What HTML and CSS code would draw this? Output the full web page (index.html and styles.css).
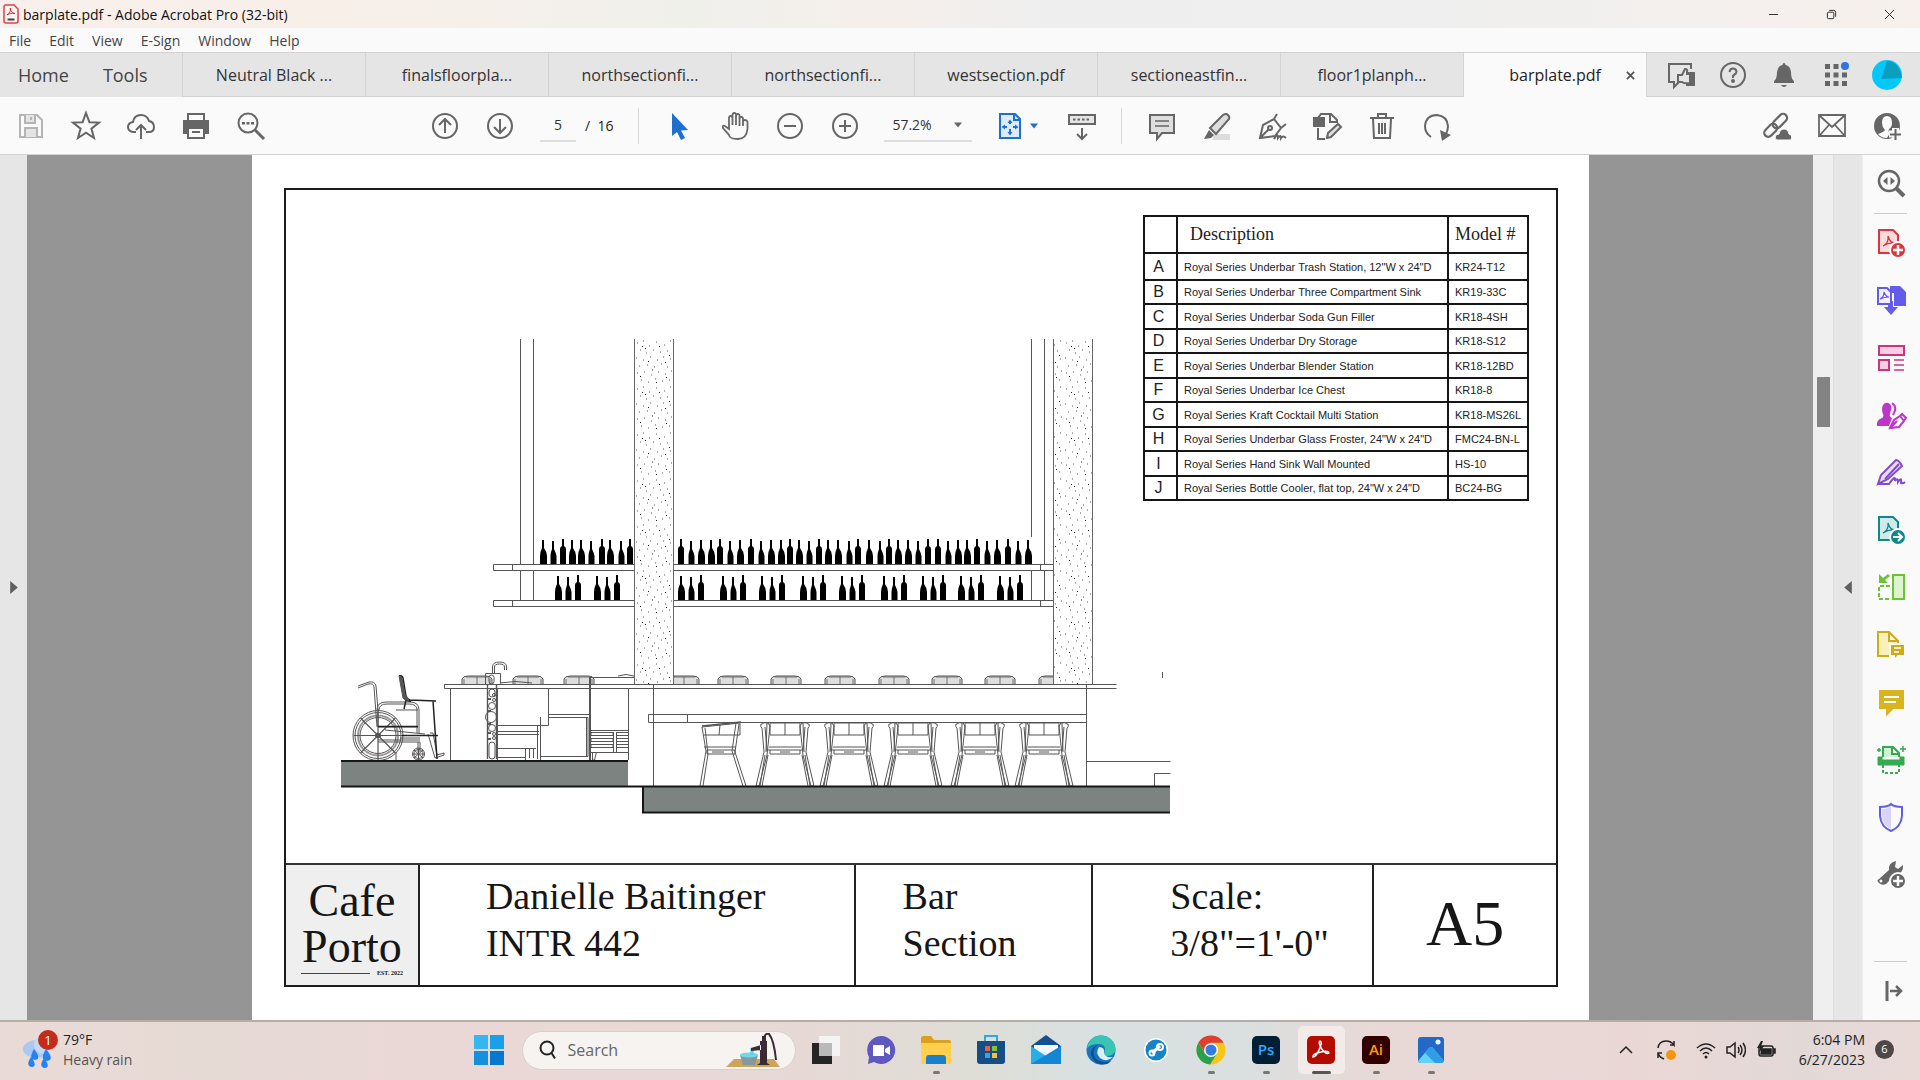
FILE: index.html
```html
<!DOCTYPE html>
<html lang="en">
<head>
    <meta charset="UTF-8">
    <meta name="viewport" content="width=device-width, initial-scale=1.0">
    <title>barplate.pdf - Adobe Acrobat Pro (32-bit)</title>
    <link rel="stylesheet" href="styles.css">
</head>
<body>
    <header class="titlebar">
        <svg class="app-icon" viewBox="0 0 16 20"><path d="M2 1h9l4 4v12q0 2-2 2H3q-2 0-2-2V3q0-2 1-2z" fill="#fff4f4" stroke="#d8434e" stroke-width="1.5"/><path d="M4 11c3-2 4-5 3.500-7-1 1 1 5 4.500 5.500-3-.5-6 0-8 1.500z" fill="none" stroke="#d42d35"/><path d="M4.500 15.500h7" stroke="#444" stroke-width="2"/></svg>
        <h1>barplate.pdf - Adobe Acrobat Pro (32-bit)</h1>
        <div class="win-buttons">
            <button aria-label="Minimize"><svg viewBox="0 0 12 12"><path d="M1 6h10"/></svg></button>
            <button aria-label="Restore"><svg viewBox="0 0 12 12"><rect x="1.500" y="3.500" width="7" height="7" rx="1"/><path d="M3.500 1.500h5q2 0 2 2v5"/></svg></button>
            <button aria-label="Close"><svg viewBox="0 0 12 12"><path d="M1 1l10 10M11 1L1 11"/></svg></button>
        </div>
    </header>

    <nav class="menubar">
        <button>File</button>
        <button>Edit</button>
        <button>View</button>
        <button>E-Sign</button>
        <button>Window</button>
        <button>Help</button>
    </nav>

    <nav class="tabs">
        <div class="tabs-home">
            <button>Home</button>
            <button>Tools</button>
        </div>
        <button class="tab">Neutral Black ...</button>
        <button class="tab">finalsfloorpla...</button>
        <button class="tab">northsectionfi...</button>
        <button class="tab">northsectionfi...</button>
        <button class="tab">westsection.pdf</button>
        <button class="tab">sectioneastfin...</button>
        <button class="tab">floor1planph...</button>
        <div class="tab active"><span>barplate.pdf</span><button class="tab-close" aria-label="Close tab"><svg viewBox="0 0 10 10"><path d="M1 1l8 8M9 1L1 9"/></svg></button></div>
        <div class="account">
            <button aria-label="Feedback"><svg class="ic" viewBox="0 0 30 30"><path d="M25 9V4H3v18h5v5l5-5"/><path class="f" d="M21 13h7v12h-7z"/><path fill="#e5e5e5" d="M12 15h4l3-6q3 0 2 3v2h3v9q-5 1-8-1h-4z"/></svg></button>
            <button aria-label="Help"><svg class="ic" viewBox="0 0 30 30"><circle cx="15" cy="15" r="12"/><path d="M11.500 12q.5-3.500 3.500-3.500t3.500 3q0 2-2 3T15 18"/><circle class="f" cx="15" cy="21" r="1"/></svg></button>
            <button aria-label="Notifications"><svg class="ic" viewBox="0 0 30 30"><path class="f" stroke="none" d="M13.500 5q0-2 1.500-2t1.500 2q5 1 5.500 7 0 7 3 9v2H5v-2q3-2 3-9 .5-6 5.500-7zM12 25h6q-3 4-6 0z"/></svg></button>
            <button aria-label="Apps"><svg class="ic" viewBox="0 0 30 30"><path class="f" stroke="none" d="M4 4h5v5H4zM12.500 4h5v5h-5zM4 12.500h5v5H4zM12.500 12.500h5v5h-5zM21 12.500h5v5h-5zM4 21h5v5H4zM12.500 21h5v5h-5zM21 21h5v5h-5z"/><circle cx="24" cy="6" r="4" fill="#2f75dd" stroke="none"/></svg></button>
            <button aria-label="Profile"><svg class="ic" viewBox="0 0 30 30"><circle cx="15" cy="15" r="15" fill="#04c8fb" stroke="none"/><path d="M15 1q12 0 15 17L9 19z" fill="#0a9fbe" stroke="none"/></svg></button>
        </div>
    </nav>

    <div class="toolbar">
        <div class="tools">
            <button aria-label="Save" disabled><svg class="ic pale" viewBox="0 0 30 30"><path d="M4 4h17l5 5v17H4z"/><path d="M9 4v8h10V4M15 6v3M9 26v-9h12v9" fill="#e4e4e4"/></svg></button>
            <button aria-label="Star"><svg class="ic" viewBox="0 0 30 30"><path d="M15 2l3.400 9.200 9.600.4-7.600 6 2.600 9.400L15 21.600 7 27l2.600-9.400-7.600-6 9.600-.4z"/></svg></button>
            <button aria-label="Upload"><svg class="ic" viewBox="0 0 30 30"><path d="M10 21H7q-5-1-5-5t5-5q1-7 8-7 6 0 8 6 5 1 5 6 0 5-5 5h-3"/><path d="M15 28V14m-5 5l5-5 5 5"/></svg></button>
            <button aria-label="Print"><svg class="ic" viewBox="0 0 30 30"><path d="M7 11V3h16v8"/><path class="f" d="M3 10h24v12h-4v-5H7v5H3z"/><path d="M7 17h16v10H7z" fill="#fafafa"/><path d="M11 21h8"/></svg></button>
            <button aria-label="Find"><svg class="ic" viewBox="0 0 30 30"><circle cx="12" cy="12" r="9.500"/><path d="M19 19l9 9" stroke-width="3"/><path class="f" stroke="none" d="M6 11h3v2.500H6zM10.500 11h3v2.500h-3zM15 11h3v2.500h-3z"/></svg></button>
        </div>
        <div class="tools paging">
            <button aria-label="Previous page"><svg class="ic" viewBox="0 0 30 30"><circle cx="15" cy="15" r="12"/><path d="M15 22V8m-6 6l6-6 6 6"/></svg></button>
            <button aria-label="Next page"><svg class="ic" viewBox="0 0 30 30"><circle cx="15" cy="15" r="12"/><path d="M15 8v14m-6-6l6 6 6-6"/></svg></button>
            <input class="page-input" type="text" value="5" aria-label="Page number">
            <span class="page-total">/&nbsp; 16</span>
        </div>
        <div class="tools view-tools">
            <button aria-label="Select"><svg class="ic" viewBox="0 0 30 30"><path d="M7 2l16 17-7 .5 4 7.500-4 2-4-8-5 4z" fill="#1f6fce" stroke="none"/></svg></button>
            <button aria-label="Hand"><svg class="ic" viewBox="0 0 30 30"><path d="M9 18V7q0-2 1.700-2t1.800 2v7V4q0-2 1.800-2T16 4v10V5q0-2 1.800-2t1.700 2v10V8q0-2 1.800-2T23 8v7-4q0-2 2-2t2.500 2v7q-1 10-9.500 10T9 24l-6-7q-1-3 2-2z" stroke-width="1.800"/></svg></button>
            <button aria-label="Zoom out"><svg class="ic" viewBox="0 0 30 30"><circle cx="15" cy="15" r="12"/><path d="M9 15h12"/></svg></button>
            <button aria-label="Zoom in"><svg class="ic" viewBox="0 0 30 30"><circle cx="15" cy="15" r="12"/><path d="M9 15h12M15 9v12"/></svg></button>
            <label class="zoom">
                <select aria-label="Zoom level"><option>57.2%</option></select>
                <svg class="caret" viewBox="0 0 8 5"><path d="M0 0h8L4 5z"/></svg>
            </label>
            <button class="fit" aria-label="Fit page"><svg class="ic blue" viewBox="0 0 30 30"><path d="M5 3h15l5 5v19H5z" fill="#dcebfb"/><path d="M19 3v6h6M15 10v3M15 18v5M8 16h4M18 16h4" /><path class="f" stroke="none" d="M12.500 12L15 8.500l2.500 3.500zM12.500 21l2.500 3.500 2.500-3.500zM10 13.500L6.500 16l3.500 2.500zM20 13.500l3.500 2.500-3.500 2.500z"/></svg><svg class="caret blue" viewBox="0 0 8 5"><path d="M0 0h8L4 5z"/></svg></button>
            <button aria-label="Scroll mode"><svg class="ic" viewBox="0 0 30 30"><path d="M2 4h26v9H2z" fill="#e4e4e4"/><path d="M6 8.500h18" stroke-dasharray="2.500 2"/><path d="M15 17v11m-5-5l5 5 5-5"/></svg></button>
        </div>
        <div class="tools">
            <button aria-label="Comment"><svg class="ic" viewBox="0 0 30 30"><path d="M3 4h24v18H15l-5 6v-6H3z" fill="#dedede"/><path d="M8 10h14M8 15h14" stroke-width="1.500"/></svg></button>
            <button aria-label="Highlight"><svg class="ic" viewBox="0 0 30 30"><path d="M12 23h16v6H10z" fill="#dcdcdc" stroke="none"/><path d="M8 17L21 4q3-2 5 0t1 4L14 23z" fill="#dedede"/><path class="f" d="M7 19l5 5-3 3-7 1z" stroke="none"/></svg></button>
            <button aria-label="Sign"><svg class="ic" viewBox="0 0 30 30"><path d="M3 27l3-13 11-6 7 9-6 8zM17 8l3-5M24 17l5-4M3 27l9-9"/><circle cx="13" cy="17" r="2"/><path d="M17 28q4-7 4-1 3-4 3 0 2-3 5 0"/></svg></button>
            <button aria-label="Edit"><svg class="ic" viewBox="0 0 30 30"><path d="M6 7l3-4h10l6 6v3M18 4v7h7M6 17v11h7"/><path class="f" d="M2 7h10v8H2z"/><path d="M15 27l1-5 10-9 3 3-10 10z" fill="#dedede"/></svg></button>
            <button aria-label="Delete"><svg class="ic" viewBox="0 0 30 30"><path d="M3 7h24M11 7V3h8v4M6 8l1 19h16l1-19M12 12v11M15 12v11M18 12v11"/></svg></button>
            <button aria-label="Rotate"><svg class="ic" viewBox="0 0 30 30"><path d="M9 26Q3 22 3 15 4 4 15 4q10 1 11 11 0 4-2 8"/><path class="f" stroke="none" d="M18 19l11 5-9 6z"/></svg></button>
        </div>
        <div class="tools share">
            <button aria-label="Link"><svg class="ic" viewBox="0 0 30 30"><g transform="rotate(-45 14 14)" stroke-width="2.200"><rect x="-1" y="10" width="15" height="8" rx="4"/><rect x="11" y="10" width="17" height="8" rx="4"/></g><path class="f" stroke="#fafafa" stroke-width="1" d="M15 29q-3-1-1-5 2-1 3-1 1-5 5-5t5 5q4 1 2 6z"/></svg></button>
            <button aria-label="Mail"><svg class="ic" viewBox="0 0 30 30"><path d="M2 4h26v21H2zM3 5l12 11L27 5M3 24l9-10M27 24l-9-10" stroke-width="1.800"/></svg></button>
            <button aria-label="Invite"><svg class="ic" viewBox="0 0 30 30"><circle class="f" cx="15" cy="15" r="12"/><path d="M10 12q0-7 5-7t5 7q0 4-3 6-1 3 1 4l-3 5q-6 0-9-4 6-2 7-4-3-3-3-7z" fill="#fafafa" stroke="none"/><path d="M17 23h13M23.500 17v13" stroke="#fafafa" stroke-width="7"/><path d="M18 23.500h11M23.500 18v11"/></svg></button>
        </div>
    </div>

    <main class="workspace">
        <button class="side-toggle" aria-label="Show left pane"><svg viewBox="0 0 7 12"><path d="M0 0l7 6-7 6z"/></svg></button>
        <div class="viewer">
            <article class="sheet">
                <div class="frame">
                    <div class="drawing">
                        <svg class="elevation" viewBox="286 190 1270 673" aria-label="Bar section drawing">
                            <defs>
                                <pattern id="stipple" x="634" y="339" width="39" height="46" patternUnits="userSpaceOnUse">
                                    <path d="M3 4h1M9 2h1M15 7h1M22 3h1M30 6h1M36 2h1M6 11h1M12 14h1M19 11h1M26 13h1M33 12h1M2 19h1M9 21h1M16 18h1M23 21h1M29 18h1M36 20h1M5 27h1M13 26h1M20 28h1M27 25h1M33 28h1M3 34h1M10 33h1M17 36h1M24 33h1M31 35h1M37 32h1M7 41h1M14 43h1M21 40h1M28 42h1M35 41h1" stroke="#555" stroke-width="1"/>
                                    <path d="M8 7l1 1M25 8l1-1M14 22l1 1M31 23l1 1M6 38l1-1M22 44l1-1M35 16l1 1M18 31l1 0M11 9l1 1M32 38l1 1" stroke="#222"/>
                                </pattern>
                                <g id="bottle-a"><path d="M-1-24h2v8q3 4 3 8V0h-7v-8q0-4 2-8z"/></g>
                                <g id="bottle-b"><path d="M-1-23h2v8q2 4 2.500 7V0h-6v-8q0-3 1.500-7z"/></g>
                                <g id="bottle-c"><path d="M-1-25h2v7q2 1 2 3V-8L3 0h-6v-15q0-2 2-3z"/></g>
                                <g id="cushion">
                                    <path d="M-15 8.500V3q1-3 6-3H9q5 0 6 3v5.500z" fill="#ddd"/>
                                    <path d="M0 1v7M-13 3v5M13 3v5M-11 1h22" stroke-width=".8"/>
                                </g>
                                <g id="chair">
                                    <path d="M-15 723h30v12h-30zM0 723v12M-16 747h32M-17 750h34M-15 750v4h30v-4M-5 752H5"/>
                                    <path d="M-23 724q1-2 6-1l2 3-3 29-8 31h-3l8-34-2-24q-2-1-1-4zM-20 727l2 24M-18 723l-1 29M-17 755l-6 31M-20 755l-5 31"/>
                                    <path d="M23 724q-1-2-6-1l-2 3 3 29 8 31h3l-8-34 2-24q2-1 1-4zM20 727l-2 24M18 723l1 29M17 755l6 31M20 755l5 31"/>
                                </g>
                            </defs>

                            <!-- shelves and posts -->
                            <g class="line">
                                <path d="M520.500 339v225M533.500 339v225M520.500 571v29M533.500 571v29M1031.500 339v198M1044.500 339v225M1031.500 571v29M1044.500 571v29"/>
                                <path d="M493.500 564.500h560v6h-560zM493.500 600.500h560v6h-560zM512.500 564v6M512.500 600v6M1040.500 564v6M1040.500 600v6"/>
                            </g>
                            <g id="bottles"></g>

                            <!-- counter and back bar -->
                            <g class="line" id="cushions"></g>
                            <g class="line">
                                <path d="M444.500 684.500h672M444.500 684v4.500h672M450.500 689v71M628.500 689v71M653.500 684v102M1086.500 684v102"/>
                                <path d="M648.500 714.500h438v8h-438zM687.500 714v8"/>
                                <path d="M1086.500 761.500h84M1154.500 786v-12.500h16M1162.500 672v6"/>
                                <path d="M497.500 689v71M497 725.500h51.500v-37M497 731.500h42M497 734.500h42M497 748.500h39M525.500 748v12M529.500 748v10M533.500 748v10M537.500 725v34M540.500 717v43M497 757.500h28"/>
                                <path d="M548.500 714.500h41M548 717.500h40v39h-47M586.500 717v39M589.500 677v83M590.500 677v83M590 677.500h44M618 676q8-3 16 0"/>
                                <path d="M590 730.500h38M591 732.500h22v3h-22zM591 738.500h22v3h-22zM591 744.500h22v3h-22zM616 732.500h12M616 735.500h12M616 738.500h12M616 741.500h12M616 744.500h12M616 747.500h12M590 752.500h38M613.500 732v20M616.500 732v20M592.500 752v8h2l2-8"/>
                                <path d="M485.500 684v-10.500h15v10M492.500 673v-6q0-5 7-5t7 5v3M494.500 673v-6q0-3 5-3t5 3v3M500 683q15-3 32 0" />
                                <path d="M487.500 684v75M496.500 684v75" stroke-width="1.400"/>
                                <rect x="489" y="675" width="5" height="9" rx="2.500"/>
                                <rect x="489" y="689" width="6" height="8" rx="3"/>
                                <circle cx="492" cy="706" r="3.500"/><circle cx="491" cy="717" r="5.500"/><circle cx="492" cy="728" r="3.500"/>
                                <circle cx="494" cy="695" r="1.500"/><circle cx="494" cy="700" r="1.500"/><circle cx="494" cy="734" r="1.500"/><circle cx="494" cy="738" r="1.500"/>
                                <path d="M488 699h3M488 724h3M488 733h3M488 739h3M488 711h3" stroke-width="2"/>
                                <rect x="489" y="742" width="6" height="17" rx="3"/>
                            </g>
                            <g class="line" id="chairs"></g>
                            <g class="line">
                                <path d="M702 727l38-4v12h-36M702 727l4 24-6 35M705 728l3 26-5 32M720 725l-1 10M736 723l-4 28 11 35M739 724l-4 28 11 34M704 747h32M707 750h28v4h-28zM712 752h12"/>
                                <path d="M702 726l39-4" stroke-width="1.500"/>
                            </g>

                            <!-- columns -->
                            <g stroke="#666" stroke-width="1">
                                <path d="M634.500 339h38.500v345h-38.500zM1053.500 339h39v345h-39z" fill="#fff" stroke="none"/>
                                <path d="M634.500 339h38.500v345h-38.500zM1053.500 339h39v345h-39z" fill="url(#stipple)" stroke="none"/>
                                <path d="M634.500 339v345M673.500 339v345M1053.500 339v345M1092.500 339v345" />
                            </g>

                            <!-- wheelchair -->
                            <g class="line">
                                <circle cx="378" cy="735.500" r="25"/>
                                <circle cx="378" cy="735.500" r="23"/>
                                <circle cx="378" cy="735.500" r="20" stroke="#999" stroke-width="2"/>
                                <circle cx="378" cy="735.500" r="18"/>
                                <circle cx="378" cy="735.500" r="2.500" fill="#222"/>
                                <path d="M378 711v49M353.500 735.500h49M360.500 718l35 35M395.500 718l-35 35" stroke-width="1.200"/>
                                <path d="M358 688l10-4q6-1 6 3l3 40M358 686l11-4q6-1 7 4l2 24M377 710q0-8 9-8h24q9 0 9 8v23M379 710q0-6 8-6h22q8 0 8 6v23M378 727h40M385 730l40 4M400 738h20M378 742h42M378 740h42M418 742v10M420 742v10M430 733h3l4 22 7-2v2l-9 3-7-24M396 710h22M378 709v18"/>
                                <path d="M378 726.500h40M402 735.500h36" stroke="#222" stroke-width="1.500"/>
                                <path d="M399 676q3-1 4 2l3 18q1 3 4 4l26 1M401 677l3 20q2 5 7 4M406 700l-2 9M433 701l4 58" stroke="#222" stroke-width="1.500"/>
                                <path d="M399 676l4 22q2 3 6 2l-4-5-3-17z" fill="#555"/>
                                <circle cx="418.500" cy="754" r="6"/><circle cx="418.500" cy="754" r="4.500"/>
                                <path d="M418.500 748v12M413 754h12M414 750l9 8M423 750l-9 8M396 752v8"/>
                            </g>

                            <!-- floor slabs -->
                            <g fill="#7d8380">
                                <path d="M341 761h287v25H341zM643 787h527v25H643z"/>
                                <path d="M341 761h287M341 786.500h829M643 786v26.500h527" fill="none" stroke="#161616" stroke-width="2"/>
                            </g>
                        </svg>

                        <table class="schedule">
                            <thead>
                                <tr><th></th><th class="desc">Description</th><th>Model #</th></tr>
                            </thead>
                            <tbody>
                                <tr><td>A</td><td>Royal Series Underbar Trash Station, 12"W x 24"D</td><td>KR24-T12</td></tr>
                                <tr><td>B</td><td>Royal Series Underbar Three Compartment Sink</td><td>KR19-33C</td></tr>
                                <tr><td>C</td><td>Royal Series Underbar Soda Gun Filler</td><td>KR18-4SH</td></tr>
                                <tr><td>D</td><td>Royal Series Underbar Dry Storage</td><td>KR18-S12</td></tr>
                                <tr><td>E</td><td>Royal Series Underbar Blender Station</td><td>KR18-12BD</td></tr>
                                <tr><td>F</td><td>Royal Series Underbar Ice Chest</td><td>KR18-8</td></tr>
                                <tr><td>G</td><td>Royal Series Kraft Cocktail Multi Station</td><td>KR18-MS26L</td></tr>
                                <tr><td>H</td><td>Royal Series Underbar Glass Froster, 24"W x 24"D</td><td>FMC24-BN-L</td></tr>
                                <tr><td>I</td><td>Royal Series Hand Sink Wall Mounted</td><td>HS-10</td></tr>
                                <tr><td>J</td><td>Royal Series Bottle Cooler, flat top, 24"W x 24"D</td><td>BC24-BG</td></tr>
                            </tbody>
                        </table>
                    </div>

                    <footer class="title-block">
                        <div class="brand">
                            <p>Cafe<br>Porto</p>
                            <small>EST. 2022</small>
                        </div>
                        <p class="author">Danielle Baitinger<br>INTR 442</p>
                        <p class="drawing-name">Bar<br>Section</p>
                        <p class="scale">Scale:<br>3/8"=1'-0"</p>
                        <p class="sheet-no">A5</p>
                    </footer>
                </div>
            </article>
        </div>
        <div class="scrollbar"><div class="thumb"></div></div>
        <button class="side-toggle right" aria-label="Hide right pane"><svg viewBox="0 0 7 12"><path d="M7 0L0 6l7 6z"/></svg></button>

        <aside class="tool-pane">
            <div class="pane-top">
                <button aria-label="Search tools"><svg class="ic" viewBox="0 0 30 30"><circle cx="13" cy="12" r="10" stroke-width="2.500"/><path d="M20 19l8 8" stroke-width="4"/><path class="f" stroke="none" d="M11.500 8v8L7 12zM14.500 8v8l4.500-4z"/></svg></button>
            </div>
            <div class="pane-list">
                <button aria-label="Create PDF"><svg class="ic red" viewBox="0 0 30 30"><path d="M3 2h14l5 5v18H3z" fill="#fbdcdc"/><path d="M7 18q6-3 5-10 2 7 7 7-6-1-12 3z" stroke-width="1.300"/><circle class="f" cx="22" cy="22" r="8" stroke="#fafafa"/><path d="M17 22h10M22 17v10" stroke="#fff" stroke-width="2.500"/></svg></button>
                <button aria-label="Combine Files"><svg class="ic indigo" viewBox="0 0 30 30"><path class="f" stroke="none" d="M14 1h10l6 6v14H18V8h-4zM12 16h5v6h5l-7 8-7-8h4z"/><path d="M2 3h9l4 4v12H2z" fill="#f2f1ff"/><path d="M4 14q4-2 4-7 2 5 5 5-5 0-9 2z" stroke-width="1.200"/></svg></button>
                <button aria-label="Organize Pages"><svg class="ic pink" viewBox="0 0 30 30"><path d="M3 3h25v9H3zM3 17h10v10H3z" fill="#f8cfe2"/><path d="M18 17h10M18 22h10M18 27h10" stroke-width="1.500"/></svg></button>
                <button aria-label="Request Signatures"><svg class="ic magenta" viewBox="0 0 30 30"><path class="f" stroke="none" d="M1 26q-1-6 5-8 2-1 1-4-2-5 0-9 3-4 7-1 3 3 0 9-1 4 2 5l-3 8z"/><path d="M16 3q6 4 1 12M14 28l4-8 6-4 4 5-5 6zM24 16l2-2 4 4-2 3M14 28l7-7" /></svg></button>
                <button aria-label="Fill and Sign"><svg class="ic violet" viewBox="0 0 30 30"><path d="M2 27l3-9L20 3q3 0 6 6L12 22z" fill="#eadffa"/><path d="M2 27h11q7-10 6-3 3-4 3 1 4-6 3 1 2 1 4-1M9 22L23 7"/></svg></button>
                <button aria-label="Export PDF"><svg class="ic teal" viewBox="0 0 30 30"><path d="M3 2h14l5 5v18H3z" fill="#cfeaec"/><path d="M7 18q6-3 5-10 2 7 7 7-6-1-12 3z" stroke-width="1.300"/><circle class="f" cx="22" cy="22" r="8" stroke="#fafafa"/><path d="M17 22h9m-4-4l4 4-4 4" stroke="#fff"/></svg></button>
                <button aria-label="Rotate Pages"><svg class="ic lime" viewBox="0 0 30 30"><path d="M17 3h11v24H17z" fill="#dcf5cd"/><path d="M14 14H3v13h11" stroke-dasharray="4 2"/><path class="f" stroke="none" d="M3 2v9h9l-3-3 5-4-2-2-5 4z"/></svg></button>
                <button aria-label="Send for Comments"><svg class="ic gold" viewBox="0 0 30 30"><path d="M14 26H2V2h11l9 9v4M13 2v9h9" fill="#faf0bb"/><path class="f" stroke="#fafafa" d="M14 14h15v12h-7l-4 5v-5h-4z"/><path d="M18 18h7M18 22h5" stroke="#fff" stroke-width="1.500"/></svg></button>
                <button aria-label="Comment"><svg class="ic yellow" viewBox="0 0 30 30"><path class="f" d="M4 4h23v17H17l-6 6v-6H4z"/><path d="M8 10h15M8 15h12" stroke="#fff"/></svg></button>
                <button aria-label="Scan and OCR"><svg class="ic green" viewBox="0 0 30 30"><path d="M7 12V2h10l6 6v4M16 2v7h6" fill="#d2f2d6"/><path class="f" d="M2 12h4v3h18v-3h4v8H2z" stroke-width="1"/><path d="M7 20v8h16v-8" stroke-dasharray="3 2"/><path d="M27 1v6M24 4h6M3 3v4M1 5h4" stroke-width="1.500"/></svg></button>
                <button aria-label="Protect"><svg class="ic indigo" viewBox="0 0 30 30"><path d="M4 5q8 0 11-3 3 3 11 3v9q-1 11-11 15Q5 25 4 14z"/><path d="M6 7q6 0 9-3v23Q6 23 6 14z" fill="#d8d5fb" stroke="none"/></svg></button>
                <button aria-label="More Tools"><svg class="ic" viewBox="0 0 30 30"><path class="f" stroke="none" d="M3 20l10-9q-1-7 7-9l-1 6 3 2 5-4q1 8-8 10l-9 9q-4 2-7-1t0-4z"/><circle cx="5" cy="22" r="1.500" fill="#fafafa" stroke="none"/><circle class="f" cx="22" cy="22" r="8" stroke="#fafafa"/><path d="M17 22h10M22 17v10" stroke="#fff" stroke-width="2.500"/></svg></button>
            </div>
            <div class="pane-bottom">
                <button aria-label="Collapse pane"><svg class="ic" viewBox="0 0 30 30"><path d="M11 5v20" stroke-width="3"/><path d="M14 15h11m-5-5l5 5-5 5" stroke-width="2.500"/></svg></button>
            </div>
        </aside>
    </main>

    <footer class="taskbar">
        <button class="weather">
            <svg viewBox="0 0 36 40"><ellipse cx="13" cy="19" rx="13" ry="9" fill="#a9c9f0"/><ellipse cx="20" cy="15" rx="9" ry="9" fill="#c5d9f2"/><path d="M11 19q8 10 1 11-7-1-1-11zM23 19q9 11 1 12-8-1-1-12zM8 27q7 9 1 10-7-1-1-10zM21 28q7 9 1 10-7-1-1-10z" fill="#2482f2"/><circle cx="25" cy="10" r="10" fill="#c42b1c"/><text x="25" y="15" text-anchor="middle">1</text></svg>
            <span>79°F<br><em>Heavy rain</em></span>
        </button>

        <div class="apps">
            <button aria-label="Start"><svg viewBox="0 0 30 30"><path d="M0 0h14v14H0z" fill="#35b6f2"/><path d="M16 0h14v14H16z" fill="#1aa0e8"/><path d="M0 16h14v14H0z" fill="#1590de"/><path d="M16 16h14v14H16z" fill="#0678d0"/></svg></button>
            <label class="search">
                <svg class="lens" viewBox="0 0 20 20"><circle cx="11" cy="8" r="6.500"/><path d="M15.500 13l3.500 5.500"/></svg>
                <input type="text" placeholder="Search">
                <svg class="pump" viewBox="0 0 54 34"><path d="M8 26h40l6 8H0z" fill="#cda45c"/><path d="M14 22h18l-3 10H17z" fill="#8799a0"/><ellipse cx="23" cy="22" rx="9" ry="2.500" fill="#6fd9e8"/><path d="M26 15v7" stroke="#59d1ee" stroke-width="3"/><path d="M34 30V8h7v22l3 2H31zM35 12l-10 3v3l10-1zM36 3h4v5h-4z" fill="#3b2b35"/><path d="M38 5q1-5 5-4 5 6 7 26" fill="none" stroke="#3b2b35" stroke-width="2"/></svg>
            </label>
            <button aria-label="Task view"><svg viewBox="0 0 30 30"><path d="M1 8h20v21H1z" fill="#252525"/><path d="M8 1h21v20H8z" fill="#f4f4f4"/><path d="M8 8h13v13H8z" fill="#b9b9b9"/></svg></button>
            <button aria-label="Chat"><svg viewBox="0 0 30 30"><path d="M15 1a14 14 0 1 1-7 26l-6 2 1-7A14 14 0 0 1 15 1z" fill="#5f58c3"/><path d="M7 10h11v11H7zM19 14l5-3v9l-5-3z" fill="#fff"/></svg></button>
            <button class="open" aria-label="File Explorer"><svg viewBox="0 0 30 30"><path d="M0 3q0-2 2-2h8l3 4h15q2 0 2 2v6H0z" fill="#dba11c"/><path d="M0 8h30v21H0z" fill="#ffd04d"/><path d="M5 29v-6q0-3 3-3h14q3 0 3 3v6z" fill="#1b7fcc"/></svg></button>
            <button aria-label="Store"><svg viewBox="0 0 30 30"><path d="M9 6V1h12v5" fill="none" stroke="#31a7dd" stroke-width="2"/><path d="M1 6h28v20q0 3-3 3H4q-3 0-3-3z" fill="#154d84"/><path d="M9 11h5v5H9z" fill="#ef5b3a"/><path d="M16 11h5v5h-5z" fill="#85bf3d"/><path d="M9 18h5v5H9z" fill="#2da9e1"/><path d="M16 18h5v5h-5z" fill="#f8bf30"/></svg></button>
            <button aria-label="Mail"><svg viewBox="0 0 30 30"><path d="M0 11L15 0l15 11v18H0z" fill="#144f91"/><path d="M3 10h24v12H3z" fill="#f2f7fb"/><path d="M0 11l15 10 15-10v18H0z" fill="#28aee8"/><path d="M0 29l30-18v18z" fill="#1287d3"/></svg></button>
            <button aria-label="Edge"><svg viewBox="0 0 30 30"><circle cx="15" cy="15" r="14.500" fill="#1976bd"/><path d="M1 13Q4 0 16 .5 28 2 29.500 13q0 8-9 8-5-1-2-4 2-8-6-8-8 0-11 4z" fill="#38c6b2"/><path d="M12 10q-8 6-2 14 6 5 15 2-4 5-12 3-6-2-8-10 0-7 7-9z" fill="#124f94"/><path d="M13 12q6 0 5 6 1 5 9 4-6 6-13 1-5-5-1-11z" fill="#dceff1"/></svg></button>
            <button aria-label="Support"><svg viewBox="0 0 30 30"><circle cx="15" cy="15" r="12" fill="#fff"/><circle cx="15" cy="15" r="10.500" fill="#1583c6"/><path d="M11 18l8-7" stroke="#fff" stroke-width="3"/><circle cx="19" cy="12" r="3" fill="none" stroke="#fff" stroke-width="2"/><circle cx="11" cy="18" r="2.500" fill="none" stroke="#fff" stroke-width="2"/></svg></button>
            <button class="open" aria-label="Chrome"><svg viewBox="0 0 30 30"><circle cx="15" cy="15" r="14.500" fill="#f8c51c"/><path d="M2.400 7.700A14.500 14.500 0 0 1 27.600 7.700H15L9 18z" fill="#df3e31"/><path d="M2.400 7.700A14.500 14.500 0 0 0 14 29.500l7-11-12 0z" fill="#2aa04a"/><circle cx="15" cy="15" r="7" fill="#fff"/><circle cx="15" cy="15" r="5.500" fill="#327ce8"/></svg></button>
            <button class="open" aria-label="Photoshop"><span class="tile ps">Ps</span></button>
            <button class="open current" aria-label="Acrobat"><svg viewBox="0 0 30 30"><rect x="1" y="1" width="28" height="28" rx="5" fill="#b30b00"/><path d="M7 22q-1-3 8-5 7-2 8 1-3 2-8-5-3-6-1-7 3 1-1 9-3 7-6 7z" fill="none" stroke="#fff" stroke-width="1.500"/></svg></button>
            <button class="open" aria-label="Illustrator"><span class="tile ai">Ai</span></button>
            <button class="open" aria-label="Photos"><svg viewBox="0 0 30 30"><rect x="2" y="2" width="26" height="26" rx="3" fill="#2569c8"/><path d="M2 26l11-13q2-2 4 0l11 13q-1 2-3 2H5q-2 0-3-2z" fill="#62d3f5"/><path d="M13 13q2-2 4 0l11 13q-1 2-3 2h-6L9 18z" fill="#2f9de8"/><circle cx="22" cy="7" r="2.500" fill="#e9f5ff"/></svg></button>
        </div>

        <div class="tray">
            <button aria-label="Hidden icons"><svg viewBox="0 0 20 20"><path d="M4 13l6-6 6 6"/></svg></button>
            <button class="sync" aria-label="Updates"><svg viewBox="0 0 20 20"><path d="M2 8q1-7 8-7 5 0 8 4V1M18 5h-4M2 13q1 4 6 6M2 18v-5h4"/><circle cx="15" cy="15" r="5" fill="#f5960f" stroke="none"/></svg></button>
            <button aria-label="Wi-Fi"><svg viewBox="0 0 20 20"><path d="M1 8q9-8 18 0M4 11q6-6 12 0M7 14q3-3 6 0"/><circle cx="10" cy="17" r="1.500" fill="#222" stroke="none"/></svg></button>
            <button aria-label="Volume"><svg viewBox="0 0 20 20"><path d="M1 7h3l5-4v14l-5-4H1zM12 7q2 3 0 6M14 5q4 5 0 10M17 3q5 7 0 14"/></svg></button>
            <button aria-label="Battery"><svg viewBox="0 0 20 20"><rect x="3" y="6" width="14" height="10" rx="2"/><path d="M6 9h9v5H5zM18 9h1v4h-1z" fill="#222"/><path d="M5 1L1 8h3l-1 5 5-7H5l2-5z" fill="#222" stroke="none"/></svg></button>
            <time>6:04 PM<br>6/27/2023</time>
            <span class="count">6</span>
        </div>
    </footer>

    <script src="drawing.js"></script>
</body>
</html>
```

FILE: styles.css
```css
*{
    box-sizing: border-box;
}

body{
    margin: 0;
    height: 100vh;
    display: flex;
    flex-direction: column;
    overflow: hidden;
    background: #fafafa;
    color: #333;
    font-family: "Segoe UI", "Open Sans", sans-serif;
    font-size: 14px;
}

button, input, select{
    margin: 0;
    padding: 0;
    border: 0;
    background: none;
    color: inherit;
    font: inherit;
    outline: none;
}

svg{
    display: block;
}

h1, p{
    margin: 0;
    font-weight: normal;
}

/* icons */
.ic{
    width: 30px;
    height: 30px;
    fill: none;
    stroke: currentColor;
    stroke-width: 2;
    color: #666;
    overflow: visible;
}

.ic .f{
    fill: currentColor;
}

.ic.pale{
    color: #b5b5b5;
}

.ic.blue{
    color: #1f6fce;
}

.ic.red{
    color: #d9363f;
}

.ic.indigo{
    color: #635bea;
}

.ic.pink{
    color: #cb3580;
}

.ic.magenta{
    color: #bd35cb;
}

.ic.violet{
    color: #8549cf;
}

.ic.teal{
    color: #128787;
}

.ic.lime{
    color: #6cc339;
}

.ic.gold{
    color: #cfab14;
}

.ic.yellow{
    color: #d9b51d;
}

.ic.green{
    color: #35aa50;
}

.caret{
    width: 8px;
    height: 6px;
    fill: #666;
}

.caret.blue{
    fill: #1f6fce;
}

/* window chrome */
.titlebar{
    display: flex;
    align-items: center;
    height: 28px;
    padding: 0 2px 0 3px;
    background: linear-gradient(90deg, #f9efec, #f8efe9 18%, #f0f0eb 36%, #f5efeb 46%, #eeeeef 56%, #efefef 75%, #f7f0ec);
    color: #111;
}

.app-icon{
    width: 16px;
    height: 20px;
    margin-right: 4px;
}

.titlebar h1{
    font-size: 14px;
}

.win-buttons{
    display: flex;
    margin-left: auto;
}

.win-buttons button{
    display: flex;
    justify-content: center;
    width: 58px;
}

.win-buttons svg{
    width: 11px;
    height: 11px;
    fill: none;
    stroke: #222;
}

.menubar{
    display: flex;
    align-items: center;
    height: 24px;
    padding-left: 9px;
    gap: 18px;
    color: #444;
}

.tabs{
    display: flex;
    height: 45px;
    border-top: 1px solid #d2d2d2;
    background: #e5e5e5;
    font-size: 16px;
}

.tabs-home{
    display: flex;
    width: 182px;
    padding-left: 18px;
    gap: 34px;
    font-size: 18px;
    color: #444;
}

.tab{
    width: 183px;
    border-left: 1px solid #d4d4d4;
    border-bottom: 1px solid #d2d2d2;
    text-align: center;
}

.tab.active{
    display: flex;
    align-items: center;
    justify-content: flex-end;
    gap: 25px;
    padding-right: 11px;
    border-bottom: 0;
    background: #fafafa;
    color: #222;
}

.tab-close svg{
    width: 9px;
    height: 9px;
    stroke: #555;
    stroke-width: 2;
}

.account{
    display: flex;
    flex: 1;
    align-items: center;
    justify-content: space-between;
    padding: 0 18px 0 19px;
    border-left: 1px solid #d4d4d4;
    border-bottom: 1px solid #d2d2d2;
}

/* toolbar */
.toolbar{
    display: flex;
    align-items: center;
    height: 58px;
    padding: 0 6px 0 3px;
    border-bottom: 1px solid #d2d2d2;
}

.tools{
    display: flex;
    align-items: center;
}

.tools button{
    display: flex;
    align-items: center;
    justify-content: center;
    width: 55px;
    height: 36px;
}

.paging{
    margin-left: 139px;
}

.page-input{
    width: 36px;
    height: 32px;
    margin: 0 9px 0 13px;
    border-bottom: 2px solid #dedede;
    text-align: center;
}

.page-total{
    color: #222;
}

.view-tools{
    margin: 0 12px 0 25px;
    padding: 0 12px 0 13px;
    border-left: 1px solid #d8d8d8;
    border-right: 1px solid #d8d8d8;
}

.zoom{
    display: flex;
    align-items: center;
    width: 88px;
    height: 32px;
    margin: 0 17px 0 12px;
    padding: 0 10px 0 8px;
    border-bottom: 2px solid #dedede;
}

.zoom select{
    flex: 1;
    appearance: none;
}

.tools .fit{
    gap: 5px;
    width: 54px;
    margin-right: 11px;
}

.share{
    margin-left: auto;
}

/* workspace */
.workspace{
    display: flex;
    flex: 1;
    min-height: 0;
}

.side-toggle{
    display: flex;
    align-items: center;
    justify-content: center;
    width: 27px;
    background: #e6e6e6;
}

.side-toggle svg{
    width: 8px;
    height: 13px;
    fill: #606060;
}

.viewer{
    flex: 1;
    display: flex;
    padding: 0 224px 0 225px;
    background: #959595;
}

.sheet{
    flex: 1;
    display: flex;
    padding: 33px 31px 33px 32px;
    background: #fff;
}

.frame{
    flex: 1;
    display: flex;
    flex-direction: column;
    border: 2px solid #1c1c1c;
}

.drawing{
    flex: 1;
    display: grid;
    grid-template-columns: 1fr;
    grid-template-rows: minmax(0, 1fr);
    min-height: 0;
}

.elevation{
    grid-area: 1 / 1;
    width: 100%;
    height: 100%;
}

.elevation .line{
    fill: none;
    stroke: #555;
    stroke-width: 1;
}

/* equipment schedule */
.schedule{
    grid-area: 1 / 1;
    justify-self: end;
    align-self: start;
    width: 386px;
    margin: 25px 27px 0 0;
    border-collapse: collapse;
    table-layout: fixed;
    font: 11px "Franklin Gothic Book", "Liberation Sans", sans-serif;
    color: #222;
}

.schedule th,
.schedule td{
    height: 25px;
    padding: 0 0 0 6px;
    border: 2px solid #161616;
    text-align: left;
    white-space: nowrap;
}

.schedule tr:nth-child(even) td{
    height: 24px;
}

.schedule tbody tr:first-child td{
    height: 27px;
}

.schedule th{
    height: 37px;
    font: 18px "Liberation Serif", serif;
}

.schedule th:first-child{
    width: 33px;
}

.schedule th:last-child{
    width: 80px;
}

.schedule .desc{
    padding-left: 12px;
}

.schedule td:first-child{
    padding: 0 4px 0 0;
    font-size: 16px;
    line-height: 20px;
    text-align: center;
}

/* title block */
.title-block{
    display: grid;
    grid-template-columns: 132fr 436fr 238fr 281fr 184fr;
    height: 122px;
    border-top: 2px solid #333;
    font: 38px/47px "Liberation Serif", serif;
    color: #161616;
}

.title-block > *{
    padding-top: 8px;
    border-left: 2px solid #222;
}

.title-block > .brand{
    padding-top: 13px;
    border-left: 0;
    background: #efefef;
    text-align: center;
}

.brand p{
    font-size: 46px;
    line-height: 46px;
}

.brand small{
    display: flex;
    align-items: center;
    gap: 7px;
    padding: 0 15px;
    font-size: 6px;
    font-weight: bold;
    line-height: 6px;
    white-space: nowrap;
}

.brand small::before{
    content: "";
    flex: 1;
    border-top: 1px solid #444;
}

.title-block .author{
    padding-left: 66px;
}

.title-block .drawing-name{
    padding-left: 47px;
}

.title-block .scale{
    padding-left: 77px;
}

.title-block .sheet-no{
    padding-top: 0;
    font-size: 64px;
    line-height: 118px;
    text-align: center;
}

/* scrollbar and right pane */
.scrollbar{
    width: 21px;
    padding: 222px 3px 0 4px;
    background: #efefef;
    border-right: 1px solid #ddd;
}

.thumb{
    height: 50px;
    background: #838383;
}

.side-toggle.right{
    width: 28px;
}

.tool-pane{
    display: flex;
    flex-direction: column;
    width: 58px;
    padding-right: 2px;
    border-left: 1px solid #eee;
}

.tool-pane button{
    display: flex;
    align-items: center;
    justify-content: center;
    width: 100%;
}

.pane-top{
    display: flex;
    height: 59px;
    margin: 0 11px;
    border-bottom: 1px solid #ccc;
}

.pane-list{
    flex: 1;
    display: flex;
    flex-direction: column;
}

.pane-list button{
    flex: 1;
}

.pane-bottom{
    display: flex;
    height: 59px;
    margin: 58px 11px 0;
    border-top: 1px solid #ccc;
}

/* taskbar */
.taskbar{
    display: grid;
    grid-template-columns: 1fr auto 1fr;
    align-items: center;
    height: 60px;
    border-top: 2px solid #b5adac;
    background: linear-gradient(90deg, #eadad7, #e6dad5 12%, #ead8d7 22%, #e6d9d5 42%, #dfddd5 50%, #d8e1e2 57%, #dadfdf 65%, #e8d9d6 72%, #ead7d5 85%, #e2d9d7 94%, #e9dad7);
}

.weather{
    display: flex;
    align-items: center;
    justify-self: start;
    gap: 4px;
    padding: 0 0 3px 23px;
    line-height: 20px;
    text-align: left;
    color: #222;
}

.weather svg{
    width: 36px;
    height: 40px;
}

.weather text{
    fill: #fff;
    font-size: 13px;
}

.weather em{
    font-style: normal;
    color: #555;
}

.apps{
    display: flex;
    align-items: center;
    height: 58px;
    padding-bottom: 2px;
}

.apps button{
    position: relative;
    display: flex;
    align-items: center;
    justify-content: center;
    width: 47px;
    height: 48px;
    margin: 0 4px;
    border-radius: 5px;
}

.apps button svg{
    width: 30px;
    height: 30px;
}

.apps .open::after{
    content: "";
    position: absolute;
    bottom: 0;
    width: 7px;
    height: 3px;
    border-radius: 2px;
    background: #777;
}

.apps .current{
    background: #f3ebea;
}

.apps .current::after{
    width: 19px;
    background: #555;
}

.search{
    display: flex;
    align-items: center;
    width: 274px;
    height: 39px;
    margin: 0 3px 0 5px;
    padding: 0 15px 0 13px;
    border: 1px solid #d6cfcc;
    border-radius: 20px;
    background: #f6f3f1;
}

.lens{
    width: 20px;
    height: 20px;
    fill: none;
    stroke: #222;
    stroke-width: 2;
}

.search input{
    flex: 1;
    min-width: 0;
    padding-left: 12px;
    font-size: 16px;
}

.search input::placeholder{
    color: #666;
    opacity: 1;
}

.pump{
    width: 54px;
    height: 34px;
}

.tile{
    width: 28px;
    height: 28px;
    border-radius: 5px;
    font-size: 15px;
    font-weight: 600;
    line-height: 27px;
    text-align: center;
}

.ps{
    background: #001e36;
    color: #31a8ff;
}

.ai{
    background: #330000;
    color: #ff9a00;
}

.tray{
    display: flex;
    align-items: center;
    justify-self: end;
    padding: 0 26px 3px 0;
    color: #222;
}

.tray button{
    display: flex;
    justify-content: center;
    width: 30px;
}

.tray .sync{
    width: 50px;
}

.tray svg{
    width: 20px;
    height: 20px;
    fill: none;
    stroke: #222;
    stroke-width: 1.5;
}

.tray time{
    margin-left: 18px;
    line-height: 20px;
    text-align: right;
}

.count{
    width: 19px;
    height: 19px;
    margin-left: 10px;
    border-radius: 50%;
    background: #4c4848;
    color: #fff;
    font-size: 11px;
    line-height: 18px;
    text-align: center;
}
```

FILE: drawing.js
```js
// x positions of the repeated parts of the bar elevation
const upperLeft = [543, 553, 563, 572, 581, 591, 602, 610, 621, 630];
const upperRight = [681, 691, 701, 711, 720, 730, 740, 751, 761, 771, 781, 790,
    799, 809, 819, 828, 838, 849, 858, 869, 880, 889, 898, 908, 918, 928, 938,
    948, 958, 967, 977, 987, 997, 1008, 1018, 1028];
const lower = [558, 597, 681, 723, 762, 803, 842, 884, 923, 961, 1000];
const cushions = [477, 528, 579, 684, 733, 786, 840, 894, 947, 1000, 1054];
const chairs = [785, 849, 913, 980, 1044];

const use = (id, x, y) => `<use href="#${id}" x="${x}" y="${y}"/>`;

const row = (xs, kinds, y) => xs.map((x, i) => use('bottle-' + kinds[i], x, y)).join('');

document.getElementById('bottles').innerHTML =
    row(upperLeft, 'abcaabcabc', 564) +
    row(upperRight, 'cbaacbacbaacabcaabcabcaabccbaacbacba', 564) +
    lower.map(x => row([x, x + 10, x + 20], 'abc', 600)).join('');

document.getElementById('cushions').innerHTML = cushions.map(x => use('cushion', x, 676)).join('');
document.getElementById('chairs').innerHTML = chairs.map(x => use('chair', x, 0)).join('');
```
